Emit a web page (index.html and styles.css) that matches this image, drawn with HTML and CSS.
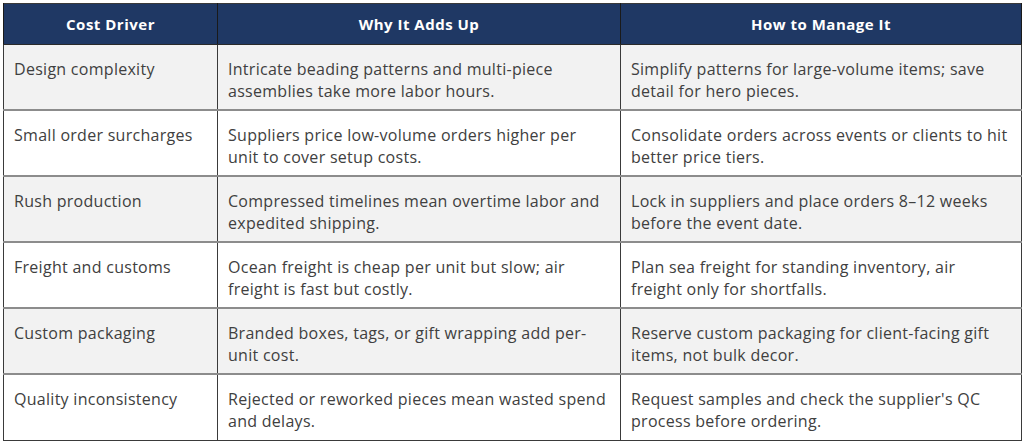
FILE: index.html
```html
<!DOCTYPE html>
<html lang="en">
<head>
<meta charset="utf-8">
<title>Cost Drivers</title>
<link rel="stylesheet" href="styles.css">
</head>
<body>
<table class="costs">
  <colgroup>
    <col class="c1"><col class="c2"><col class="c3">
  </colgroup>
  <thead>
    <tr><th>Cost Driver</th><th>Why It Adds Up</th><th>How to Manage It</th></tr>
  </thead>
  <tbody>
    <tr class="shade">
      <td>Design complexity</td>
      <td>Intricate beading patterns and multi-piece<br>assemblies take more labor hours.</td>
      <td>Simplify patterns for large-volume items; save<br>detail for hero pieces.</td>
    </tr>
    <tr>
      <td>Small order surcharges</td>
      <td>Suppliers price low-volume orders higher per<br>unit to cover setup costs.</td>
      <td>Consolidate orders across events or clients to hit<br>better price tiers.</td>
    </tr>
    <tr class="shade">
      <td>Rush production</td>
      <td>Compressed timelines mean overtime labor and<br>expedited shipping.</td>
      <td>Lock in suppliers and place orders 8–12 weeks<br>before the event date.</td>
    </tr>
    <tr>
      <td>Freight and customs</td>
      <td>Ocean freight is cheap per unit but slow; air<br>freight is fast but costly.</td>
      <td>Plan sea freight for standing inventory, air<br>freight only for shortfalls.</td>
    </tr>
    <tr class="shade">
      <td>Custom packaging</td>
      <td>Branded boxes, tags, or gift wrapping add per-<br>unit cost.</td>
      <td>Reserve custom packaging for client-facing gift<br>items, not bulk decor.</td>
    </tr>
    <tr class="last">
      <td>Quality inconsistency</td>
      <td>Rejected or reworked pieces mean wasted spend<br>and delays.</td>
      <td>Request samples and check the supplier's QC<br>process before ordering.</td>
    </tr>
  </tbody>
</table>
</body>
</html>
```
FILE: styles.css
```css
html, body {
  margin: 0;
  padding: 0;
  background: #ffffff;
}
body {
  padding: 3px 0 0 3px;
  font-family: "Open Sans", "Liberation Sans", sans-serif;
}
.costs {
  border-collapse: collapse;
  width: 1018px;
  table-layout: fixed;
  border: 1px solid #3a3a3a;
}
.c1 { width: 214px; }
.c2 { width: 403px; }
.c3 { width: 401px; }
.costs th {
  background: #1f3864;
  color: #ffffff;
  font-weight: 700;
  font-size: 15px;
  letter-spacing: 0.5px;
  height: 41px;
  padding: 0 8px;
  text-align: center;
  vertical-align: middle;
  border-left: 1px solid #1a1a1a;
  border-right: 1px solid #1a1a1a;
  border-bottom: 1px solid #2a2a2a;
  box-sizing: border-box;
}
.costs td {
  font-size: 16px;
  letter-spacing: 0.28px;
  line-height: 22px;
  color: #404040;
  padding: 13px 10px 7px 10px;
  vertical-align: top;
  border-left: 1px solid #3a3a3a;
  border-right: 1px solid #3a3a3a;
  border-bottom: 2px solid #8c8c8c;
  height: 44px;
  white-space: nowrap;
}
.last td {
  border-bottom: 1px solid #3a3a3a;
  padding-bottom: 8px;
}
.shade td {
  background: #f2f2f2;
}
```
